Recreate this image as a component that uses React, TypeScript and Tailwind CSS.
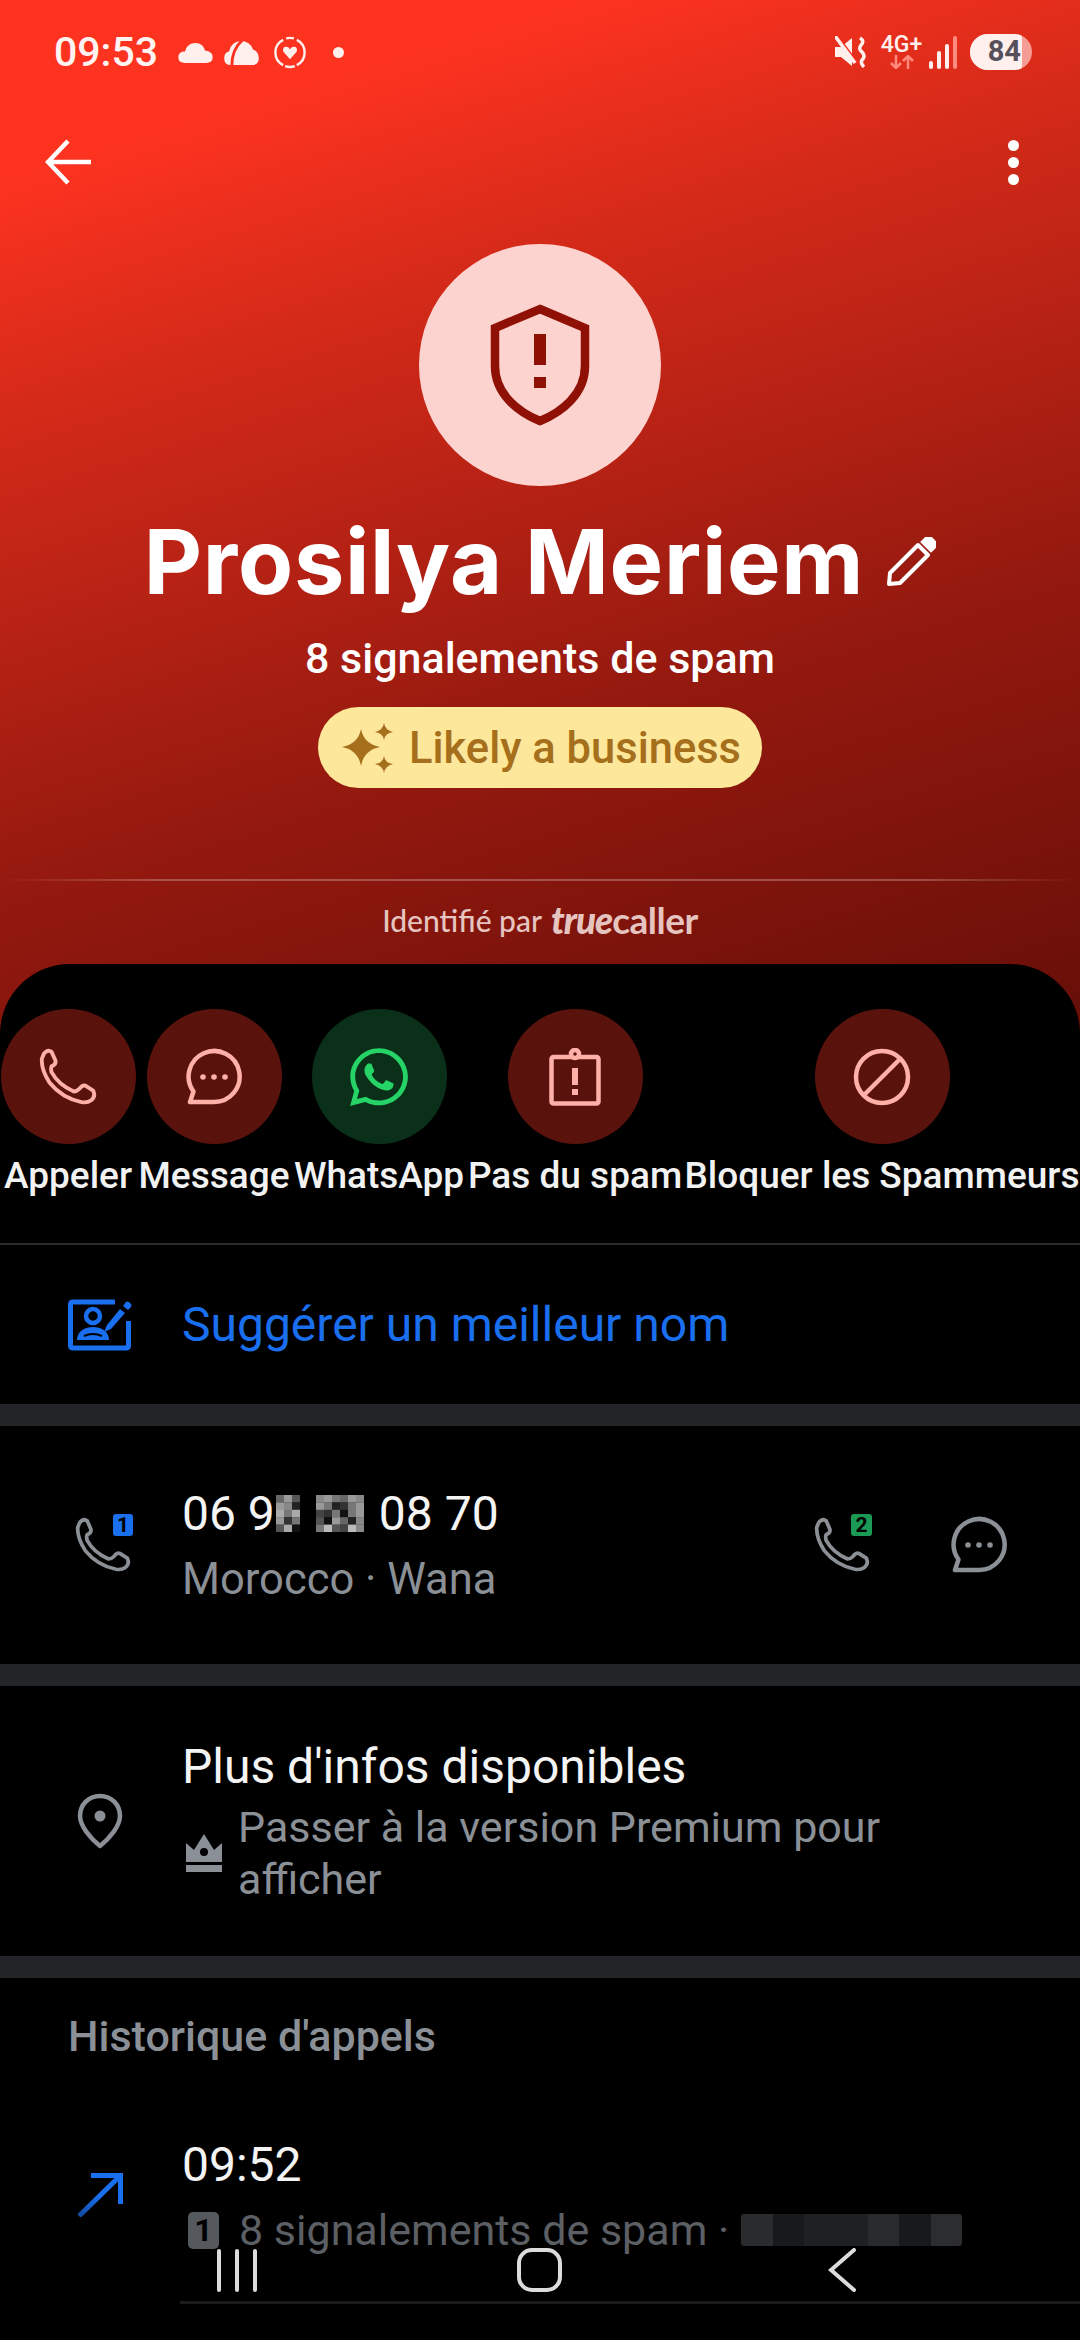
import React from "react";
import { FaWhatsapp } from "react-icons/fa";

const PINK = "#ffb0a8";
const GREY = "#8b9097";

function PhoneIcon({ color, className }: { color: string; className?: string }) {
  return (
    <svg viewBox="0 0 60 60" className={className} fill="none" stroke={color} strokeWidth="4" strokeLinejoin="round">
      <path d="M5 6 Q9 1 13 4 L17 13 Q18 17 13 19 Q12 21 13 25 Q20 38 36 45 Q39 45 42 42 Q45 38 48 39 L56 44 Q59 50 54 54 Q50 57 44 56 Q24 52 11 36 Q2 22 3 11 Z" />
    </svg>
  );
}

function BubbleIcon({ color, className }: { color: string; className?: string }) {
  return (
    <svg viewBox="0 0 58 58" className={className} fill="none">
      <path d="M5 54 H29 A25.5 25.5 0 1 0 8.5 43.5 Z" stroke={color} strokeWidth="4.5" strokeLinejoin="round" />
      <circle cx="18" cy="29" r="2.8" fill={color} />
      <circle cx="29" cy="29" r="2.8" fill={color} />
      <circle cx="40" cy="29" r="2.8" fill={color} />
    </svg>
  );
}

function Mosaic({ cells, cols }: { cells: string[]; cols: number }) {
  const rows = Math.ceil(cells.length / cols);
  return (
    <svg width={cols * 8} height={37} viewBox={`0 0 ${cols * 8} ${rows * 7.4}`} preserveAspectRatio="none">
      {cells.map((c, i) => (
        <rect key={i} x={(i % cols) * 8} y={Math.floor(i / cols) * 7.4} width="8.2" height="7.6" fill={c} />
      ))}
    </svg>
  );
}

function Action({ label, width, tone, children }: { label: string; width: string; tone: string; children: React.ReactNode }) {
  return (
    <div className={`${width} flex flex-col items-center shrink-0`}>
      <div className={`${tone} w-[135px] h-[135px] rounded-full flex items-center justify-center`}>{children}</div>
      <div className="mt-[10px] h-[44px] leading-[44px] text-[37px] font-medium text-[#f2f2f2] whitespace-nowrap">{label}</div>
    </div>
  );
}

function Sparkles() {
  return (
    <svg viewBox="0 0 51 50" className="w-[51px] h-[50px]" fill="#a56f1c">
      <path d="M19 6 Q22 21 38 24 Q22 27 19 43 Q16 27 0 24 Q16 21 19 6 Z" />
      <path d="M42 0 Q43 7 51 9 Q43 10 42 17 Q41 10 33 9 Q41 7 42 0 Z" />
      <path d="M42 33 Q43 40 51 41 Q43 43 42 50 Q41 43 33 41 Q41 40 42 33 Z" />
    </svg>
  );
}

function StatusBar() {
  return (
    <div className="h-[104px] flex items-center justify-between pl-[54px] pr-[48px] text-white">
      <div className="flex items-center">
        <span className="w-[105px] text-[41px] font-medium leading-none text-[#fff4f2]">09:53</span>
        {/* cloud */}
        <svg viewBox="0 0 36 22" className="w-[35px] h-[21px] ml-[19px]" fill="#fff0ee">
          <path d="M7 22 Q0 22 0 16 Q0 10 7 10 Q9 1 18 1 Q26 1 28 9 Q36 10 36 16 Q36 22 29 22 Z" />
        </svg>
        <svg viewBox="0 0 36 26" className="w-[35px] h-[25px] ml-[11px]" fill="#fff0ee">
          <path d="M6 26 Q0 26 0 19 Q0 13 5 12 Q7 2 17 1 Q27 1 30 10 Q36 12 36 19 Q36 26 29 26 Z" />
          <path d="M19 0 Q8 10 8 26" stroke="#fb3220" strokeWidth="3" fill="none" />
        </svg>
        <svg viewBox="0 0 32 34" className="w-[32px] h-[33px] ml-[15px]" fill="none">
          <path d="M9 4 A14.5 14.5 0 0 0 9 30 M23 4 A14.5 14.5 0 0 1 23 30 M11 31 A15 15 0 0 0 21 31 M12 2.5 A15 15 0 0 1 20 2.5" stroke="#fff0ee" strokeWidth="2.5" />
          <path d="M16 24 L9 16 Q8 11 12 11 Q15 11 16 14 Q17 11 20 11 Q24 11 23 16 Z" fill="#fff0ee" />
        </svg>
        <span className="w-[11px] h-[11px] rounded-full bg-[#fff0ee] ml-[27px]" />
      </div>
      <div className="flex items-center">
        <svg viewBox="0 0 35 32" className="w-[35px] h-[32px]" fill="#fff0ee">
          <path d="M0 11 H6 L17 2 V30 L6 21 H0 Z" />
          <path d="M2 0 L22 27" stroke="#f8301f" strokeWidth="3" />
          <path d="M0 0 L20 27" stroke="#fff0ee" strokeWidth="3.5" />
          <path d="M25 2 Q30 5 26 9 Q23 13 27 16 Q31 20 27 24 Q25 27 29 31" stroke="#fff0ee" strokeWidth="3.5" fill="none" />
        </svg>
        <div className="ml-[11px] w-[41px] flex flex-col items-center">
          <span className="text-[23px] leading-[20px] font-medium whitespace-nowrap text-[#fff0ee]">4G+</span>
          <svg viewBox="0 0 24 14" className="w-[24px] h-[14px]" fill="none" stroke="#ff8a7d" strokeWidth="2.5">
            <path d="M6 0 V13 M1 8 L6 13 L11 8 M18 14 V1 M13 6 L18 1 L23 6" />
          </svg>
        </div>
        <div className="ml-[7px] flex items-end gap-[4px] h-[33px]">
          <span className="w-[4px] h-[8px] rounded-full bg-[#fff0ee]" />
          <span className="w-[4px] h-[18px] rounded-full bg-[#fff0ee]" />
          <span className="w-[4px] h-[25px] rounded-full bg-[#fff0ee]" />
          <span className="w-[4px] h-[33px] rounded-full bg-[#ff8a7d]" />
        </div>
        <div className="ml-[13px] w-[62px] h-[36px] rounded-full overflow-hidden bg-[#f59d94] flex">
          <div className="w-[52px] h-full bg-[#fff0ee] rounded-r-[4px] flex items-center justify-end pr-[1px] text-[29px] font-bold text-[#55505a]">84</div>
        </div>
      </div>
    </div>
  );
}

function Row({ icon, height, children, right }: { icon: React.ReactNode; height: string; children: React.ReactNode; right?: React.ReactNode }) {
  return (
    <div className={`${height} flex items-center`}>
      <div className="w-[64px] ml-[68px] mr-[50px] flex justify-center shrink-0">{icon}</div>
      <div className="flex-1 min-w-0">{children}</div>
      {right}
    </div>
  );
}

const Thick = () => <div className="h-[22px] bg-[#232428]" />;

export default function App() {
  return (
    <div className="relative w-[1080px] h-[2340px] overflow-hidden bg-black font-['Roboto',sans-serif]">
      <div className="h-full flex flex-col bg-no-repeat bg-[length:1080px_1060px] bg-[linear-gradient(163deg,#fd3320_13%,#d42a19_30%,#95190f_64%,#630e08_100%)]">
        <StatusBar />

        {/* toolbar */}
        <div className="h-[116px] flex items-center justify-between pl-[45px] pr-[61px]">
          <svg viewBox="0 0 46 46" className="w-[46px] h-[46px]" fill="none" stroke="#fff" strokeWidth="4.5">
            <path d="M46 23 H3 M23 2 L3 23 L23 44" />
          </svg>
          <div className="flex flex-col gap-[6px]">
            <span className="w-[11px] h-[11px] rounded-full bg-white" />
            <span className="w-[11px] h-[11px] rounded-full bg-white" />
            <span className="w-[11px] h-[11px] rounded-full bg-white" />
          </div>
        </div>

        {/* caller summary */}
        <div className="flex flex-col items-center mt-[24px]">
          <div className="w-[242px] h-[242px] rounded-full bg-[#fdd3cf] flex items-center justify-center">
            <svg viewBox="0 0 100 122" className="w-[100px] h-[122px]" fill="none">
              <path d="M50 5 L95 24 V62 C95 90 72 108 50 117 C28 108 5 90 5 62 V24 Z" stroke="#8f1106" strokeWidth="8.5" strokeLinejoin="miter" />
              <rect x="44" y="30" width="12" height="31" fill="#8f1106" />
              <rect x="44" y="73" width="12" height="11" fill="#8f1106" />
            </svg>
          </div>
          <div className="mt-[26px] h-[100px] flex items-center">
            <span className="font-['Inter',sans-serif] font-bold text-[90px] tracking-[0.7px] leading-[100px] text-white whitespace-nowrap">Prosilya Meriem</span>
            <svg viewBox="0 0 50 50" className="w-[50px] h-[50px] ml-[22px]" fill="none" stroke="#fff" strokeWidth="4">
              <path d="M3 47 L4 36 L32 8 L42 18 L14 46 Z" strokeLinejoin="round" />
              <path d="M37 5 L41 1 Q43 0 45 2 L49 6 Q50 8 48 10 L45 13 Z" fill="#fff" />
            </svg>
          </div>
          <div className="mt-[21px] h-[50px] leading-[50px] text-[43px] font-medium text-white">8 signalements de spam</div>
          <div className="mt-[24px] h-[81px] w-[444px] rounded-full bg-[#fde79b] flex items-center pl-[24px] gap-[16px]">
            <Sparkles />
            <span className="text-[43.5px] leading-[81px] pt-[2px] font-medium text-[#a56f1c] whitespace-nowrap">Likely a business</span>
          </div>
          <div className="mt-[91px] w-full h-[2px] bg-[linear-gradient(90deg,#ffffff00,#ffffff40_15%,#ffffff40_85%,#ffffff00)]" />
          <div className="mt-[19px] h-[40px] flex items-end font-['Lato',sans-serif] text-[#e6c4c0] whitespace-nowrap">
            <span className="text-[30px] font-medium leading-[40px]">Identifié par</span>
            <span className="ml-[9px] text-[37px] leading-[40px] font-black italic tracking-[-1px]">true</span>
            <span className="text-[37px] leading-[40px] font-bold tracking-[-0.5px]">caller</span>
          </div>
        </div>

        {/* bottom sheet */}
        <div className="mt-[24px] flex-1 bg-black rounded-t-[70px] pt-[45px]">
          <div className="flex">
            <Action label="Appeler" width="w-[136px]" tone="bg-[#5a130c]">
              <PhoneIcon color={PINK} className="w-[58px] h-[58px]" />
            </Action>
            <Action label="Message" width="w-[156px]" tone="bg-[#5a130c]">
              <BubbleIcon color={PINK} className="w-[58px] h-[58px]" />
            </Action>
            <Action label="WhatsApp" width="w-[174px]" tone="bg-[#0b3019]">
              <FaWhatsapp className="w-[66px] h-[66px] text-[#25d366]" />
            </Action>
            <Action label="Pas du spam" width="w-[218px]" tone="bg-[#5a130c]">
              <svg viewBox="0 0 52 58" className="w-[52px] h-[58px]" fill="none" stroke={PINK} strokeWidth="4.5">
                <rect x="2.5" y="9" width="47" height="46.5" rx="2" strokeLinejoin="round" />
                <circle cx="26" cy="6" r="4" fill="#5a130c" />
                <rect x="23" y="20" width="6" height="17" fill={PINK} stroke="none" />
                <rect x="23" y="41" width="6" height="6" fill={PINK} stroke="none" />
              </svg>
            </Action>
            <Action label="Bloquer les Spammeurs" width="w-[396px]" tone="bg-[#5a130c]">
              <svg viewBox="0 0 58 58" className="w-[58px] h-[58px]" fill="none" stroke={PINK} strokeWidth="4.5">
                <circle cx="29" cy="29" r="26" />
                <path d="M11 47 L47 11" />
              </svg>
            </Action>
          </div>

          <div className="mt-[45px] h-[2px] bg-[#2a2b2e]" />

          <Row
            height="h-[159px]"
            icon={
              <svg viewBox="0 0 64 52" className="w-[64px] h-[52px]" fill="none">
                <path d="M47 3 H5 Q2.5 3 2.5 5.5 V46.5 Q2.5 49 5 49 H58 Q60.5 49 60.5 46.5 V22" stroke="#1a6fee" strokeWidth="5" />
                <circle cx="25" cy="17" r="7" stroke="#1a6fee" strokeWidth="4.5" />
                <path d="M9 41 C9 32 17 28 25 28 C33 28 41 32 41 41 Z" fill="#1a6fee" />
                <path d="M16 37 Q25 33 34 37" stroke="#000" strokeWidth="2" />
                <path d="M39 26 L36 33 L43 30 L57 14 L52 10 Z" fill="#1a6fee" />
                <path d="M55 7 L58 3 Q60 2 61 3 L63 5 Q64 7 63 8 L60 11 Z" fill="#1a6fee" />
              </svg>
            }
          >
            <span className="text-[48px] text-[#1a6fee] whitespace-nowrap">Suggérer un meilleur nom</span>
          </Row>

          <Thick />

          <Row
            height="h-[238px]"
            icon={
              <div className="relative w-[56px] h-[58px] ml-[6px]">
                <PhoneIcon color={GREY} className="w-[56px] h-[58px]" />
                <span className="absolute -top-[2px] left-[38px] w-[20px] h-[22px] rounded-[3px] bg-[#1a6fee] text-[21px] leading-[22px] font-bold text-black text-center">1</span>
              </div>
            }
            right={
              <div className="flex items-center pr-[72px] gap-[80px]">
                <div className="relative w-[56px] h-[58px]">
                  <PhoneIcon color={GREY} className="w-[56px] h-[58px]" />
                  <span className="absolute -top-[2px] left-[37px] w-[21px] h-[22px] rounded-[3px] bg-[#1b9a55] text-[21px] leading-[22px] font-bold text-black text-center">2</span>
                </div>
                <BubbleIcon color={GREY} className="w-[58px] h-[58px]" />
              </div>
            }
          >
            <div className="h-[60px] flex items-center text-[48px] text-[#f4f4f4] whitespace-nowrap">
              <span>06 9</span>
              <span className="ml-[1px] flex">
                <Mosaic cols={3} cells={["#666", "#999", "#555", "#999", "#888", "#222", "#aaa", "#777", "#aaa", "#999", "#333", "#777", "#555", "#aaa", "#111"]} />
              </span>
              <span className="ml-[16px] flex">
                <Mosaic cols={6} cells={["#888", "#999", "#777", "#666", "#999", "#888", "#999", "#777", "#222", "#333", "#777", "#999", "#444", "#333", "#777", "#111", "#777", "#999", "#555", "#111", "#999", "#666", "#222", "#888", "#777", "#bbb", "#555", "#444", "#bbb", "#888"]} />
              </span>
              <span className="ml-[15px]">08 70</span>
            </div>
            <div className="mt-[8px] h-[55px] leading-[55px] text-[43.5px] text-[#8b9097] whitespace-nowrap">Morocco · Wana</div>
          </Row>

          <Thick />

          <Row
            height="h-[270px]"
            icon={
              <svg viewBox="0 0 46 56" className="w-[46px] h-[56px]" fill="none" stroke={GREY} strokeWidth="4.5">
                <path d="M23 3 C11 3 3 12 3 23 C3 33 14 46 23 53 C32 46 43 33 43 23 C43 12 35 3 23 3 Z" strokeLinejoin="round" />
                <circle cx="23" cy="23" r="5.5" fill={GREY} stroke="none" />
              </svg>
            }
          >
            <div className="h-[60px] leading-[60px] text-[48px] text-[#f4f4f4] whitespace-nowrap">Plus d'infos disponibles</div>
            <div className="mt-[4px] flex items-center text-[#8b9097]">
              <svg viewBox="0 0 36 38" className="ml-[4px] w-[36px] h-[38px] shrink-0" fill={GREY}>
                <path d="M0 9 L8 16 L18 0 L28 16 L36 9 V28 H0 Z" />
                <circle cx="18" cy="18" r="4" fill="#000" />
                <rect x="0" y="31" width="36" height="7" />
              </svg>
              <div className="ml-[16px] w-[680px] text-[43px] leading-[52px]">Passer à la version Premium pour afficher</div>
            </div>
          </Row>

          <Thick />

          <div className="pt-[33px] pl-[68px] h-[84px] text-[43px] leading-[50px] font-medium text-[#8b9097] whitespace-nowrap">Historique d'appels</div>

          <div className="mt-[73px]">
            <Row
              height="h-[120px]"
              icon={
                <svg viewBox="0 0 46 44" className="w-[46px] h-[44px]" fill="none" strokeWidth="5">
                  <defs>
                    <linearGradient id="tail" x1="0" y1="1" x2="1" y2="0">
                      <stop offset="0" stopColor="#124a9e" />
                      <stop offset="0.5" stopColor="#1a6fee" />
                    </linearGradient>
                  </defs>
                  <path d="M2 43 L43 3" stroke="url(#tail)" />
                  <path d="M14 2.5 H43.5 V31" stroke="#1a6fee" />
                </svg>
              }
            >
              <div className="h-[60px] leading-[60px] text-[48px] text-[#f4f4f4]">09:52</div>
              <div className="mt-[10px] h-[50px] flex items-center text-[#5c5f63] whitespace-nowrap">
                <span className="ml-[6px] w-[31px] h-[37px] rounded-[5px] bg-[#55585c] text-[32px] leading-[37px] font-bold text-black text-center shrink-0">1</span>
                <span className="ml-[20px] text-[43px] leading-[50px]">8 signalements de spam ·</span>
                <span className="ml-[12px] w-[221px] h-[32px] flex overflow-hidden rounded-[3px]">
                  <span className="flex-[3] bg-[#2a2b2d]" />
                  <span className="flex-[3] bg-[#18191a]" />
                  <span className="flex-[6] bg-[#1f2022]" />
                  <span className="flex-[3] bg-[#292a2c]" />
                  <span className="flex-[3] bg-[#18191a]" />
                  <span className="flex-[3] bg-[#2c2d2f]" />
                </span>
              </div>
            </Row>
          </div>
        </div>
      </div>

      {/* system nav floats over the list */}
      <div className="absolute left-0 right-0 top-[2248px]">
        <div className="flex items-center h-[44px] pl-[217px]">
          <div className="flex gap-[14px] h-[43px] w-[41px]">
            <span className="w-[4px] rounded-full bg-[#dcdcdc]" />
            <span className="w-[4px] rounded-full bg-[#dcdcdc]" />
            <span className="w-[4px] rounded-full bg-[#dcdcdc]" />
          </div>
          <div className="ml-[259px] w-[45px] h-[44px] rounded-[15px] border-[4px] border-[#dcdcdc]" />
          <svg viewBox="0 0 28 44" className="ml-[266px] w-[28px] h-[44px]" fill="none" stroke="#dcdcdc" strokeWidth="4" strokeLinecap="round">
            <path d="M26 2 L3 22 L26 42" />
          </svg>
        </div>
        <div className="mt-[9px] ml-[180px] h-[3px] bg-[#1b1b1d]" />
      </div>
    </div>
  );
}
